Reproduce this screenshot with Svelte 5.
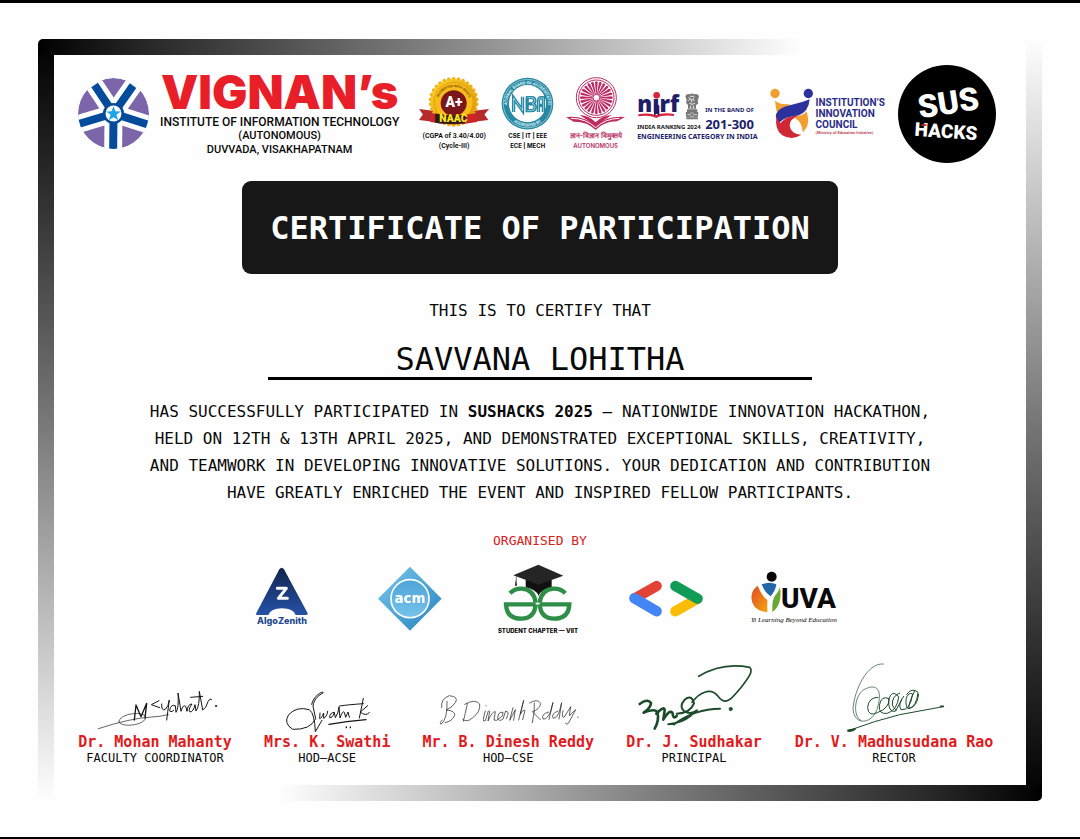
<script>
  const rays = Array.from({ length: 24 }, (_, i) => i * 15);
  const teeth = Array.from({ length: 30 }, (_, i) => i * 12);
  const spokes = [
    [284, 254],
    [400, 256],
    [238, 371],
    [444, 373],
    [340, 450]
  ];
</script>

<main class="sheet">
  <article class="frame">
    <div class="content">
      <header class="header">
        <div class="brand">
          <svg class="brand-mark" viewBox="234 233 214 214" aria-hidden="true">
            <defs>
              <clipPath id="wheel"><circle cx="341" cy="340" r="107" /></clipPath>
            </defs>
            <g clip-path="url(#wheel)">
              <circle cx="341" cy="340" r="107" fill="#7c65a9" />
              {#each spokes as [x, y]}
                <line x1="341" y1="340" x2={x} y2={y} stroke="#fff" stroke-width="54" stroke-linecap="square" />
              {/each}
              {#each spokes as [x, y]}
                <line x1="341" y1="340" x2={x} y2={y} stroke="#054b9b" stroke-width="24" />
              {/each}
            </g>
            <circle cx="341" cy="340" r="32" fill="#054b9b" />
            <circle cx="341" cy="340" r="24" fill="#fff" />
            <path d="M341 318l6 15 16 1-13 10 5 16-14-9-14 9 5-16-13-10 16-1z" fill="#20a5e8" />
          </svg>
          <div class="brand-text">
            <div class="brand-name">VIGNAN’s</div>
            <div class="brand-line">INSTITUTE OF INFORMATION TECHNOLOGY</div>
            <div class="brand-line small">(AUTONOMOUS)</div>
            <div class="brand-line small">DUVVADA, VISAKHAPATNAM</div>
          </div>
        </div>

        <div class="badges">
          <div class="badge naac">
            <svg viewBox="49 15 216 198" aria-hidden="true">
              <defs>
                <path id="naac-arc" d="M106 130a50 50 0 0 1 100 0" />
                <linearGradient id="gold" x1="0" y1="0" x2="1" y2="1">
                  <stop offset="0" stop-color="#fbd125" />
                  <stop offset="1" stop-color="#dc930b" />
                </linearGradient>
              </defs>
              <path d="M49 148l50 6v34l-50-6 12-17zM265 148l-52 6v34l50-6-12-17z" fill="#b52b2c" />
              {#each teeth as a}
                <circle cx="156" cy="55" r="6" fill="#efb01a" transform="rotate({a} 156 126)" />
              {/each}
              <circle cx="156" cy="126" r="71" fill="url(#gold)" />
              <circle cx="156" cy="126" r="60" fill="#f8bd1b" stroke="#d88d08" stroke-width="2" />
              <text font-size="10" font-weight="700" fill="#764308"><textPath href="#naac-arc" startOffset="50%" text-anchor="middle">ACCREDITED WITH GRADE</textPath></text>
              <circle cx="156" cy="130" r="40" fill="#7b171b" />
              <path d="M84 160q72 14 144 0v28q-72 14-144 0z" fill="#cc2529" />
              <path d="M99 162q57 10 96 3l-5 27q-46 5-91-2z" fill="#2c1c18" />
              <text class="naac-grade" x="157" y="143" text-anchor="middle">A+</text>
              <text class="naac-label" x="155" y="188" text-anchor="middle">NAAC</text>
            </svg>
            <span class="caption-cgpa">(CGPA of 3.40/4.00)</span>
            <span class="caption-cgpa">(Cycle-III)</span>
          </div>

          <div class="badge nba">
            <svg viewBox="303 15 160 198" aria-hidden="true">
              <defs>
                <path id="nba-top" d="M321 134a62 62 0 0 1 124 0" />
                <path id="nba-bottom" d="M316 133a67 67 0 0 0 134 0" />
              </defs>
              <circle cx="383" cy="131" r="78" fill="#2688a3" />
              <circle cx="383" cy="131" r="73" fill="none" stroke="#b6dce5" stroke-width="2" />
              <circle cx="383" cy="131" r="56" fill="#fff" />
              <text class="ring-text"><textPath href="#nba-top" startOffset="50%" text-anchor="middle">NATIONAL BOARD OF ACCREDITATION</textPath></text>
              <text class="ring-text"><textPath href="#nba-bottom" startOffset="50%" text-anchor="middle">ACCREDITED BY</textPath></text>
              <g fill="none" stroke="#2688a3" stroke-width="10">
                <path d="M341 156v-42l27 38v-42M378 113h18q9 0 9 9 0 7-8 9 9 2 9 10 0 11-11 11h-18M383 132h15M382 113v39M416 156v-32q0-11 10-11h5v43M416 136h15" />
              </g>
              <path d="M341 156v-42l27 38v-42M382 113h14q9 0 9 9 0 7-8 9 9 2 9 10 0 11-11 11h-13M416 156v-32q0-11 10-11h5v43" fill="none" stroke="#d3edf3" stroke-width="2" />
            </svg>
            <span class="caption-branch">CSE | IT | EEE</span>
            <span class="caption-branch">ECE | MECH</span>
          </div>

          <div class="badge ugc">
            <svg viewBox="490 15 177 198" aria-hidden="true">
              <circle cx="581" cy="113" r="60" fill="#fff" stroke="#be2b64" stroke-width="3" />
              <circle cx="581" cy="113" r="53" fill="#fff" stroke="#be2b64" stroke-width="3" />
              {#each rays as a}
                <path d="M580 102l-3-35q4-7 8 0l-3 35z" fill="#be2b64" transform="rotate({a} 581 113)" />
              {/each}
              <circle cx="581" cy="113" r="10" fill="#fff" stroke="#be2b64" stroke-width="3" />
              <path d="M490 171q53-5 89 25 36-29 88-25l-24 13q-39 0-64 26-25-26-66-25z" fill="#bd2b5f" />
              <path d="M505 175q45 0 74 28 28-27 71-28" fill="none" stroke="#fff" stroke-width="3" />
              <path d="M531 165q30 2 48 22 18-20 48-22l-48 32z" fill="#bd2b5f" />
            </svg>
            <span class="caption-hindi" lang="hi">ज्ञान-विज्ञान विमुक्तये</span>
            <span class="caption-auto">AUTONOMOUS</span>
          </div>

          <div class="nirf">
            <div class="nirf-left">
              <svg viewBox="33 15 195 171" aria-hidden="true">
                <text class="nirf-word" x="34" y="156">nırf</text>
                <circle cx="92" cy="106" r="10" fill="#d8253c" />
                <path d="M37 163q34-6 53 3 20-10 54-4v6q-34-4-53 6-20-10-54-5z" fill="#d8253c" />
                <path d="M84 167v-30q8-9 16 0v30l-8-6z" fill="#211d68" />
                <g fill="#777">
                  <path d="M178 109q4-9 14-6 6-5 12 0 10-4 15 5l-4 15 2 7-7 6v10h-24v-11l-6-7 2-7z" />
                  <path d="M183 148h31v7h-31zM179 157q18-7 38 0l-2 16h-34zM181 174h35v4h-35z" />
                </g>
                <path d="M187 113l7 4-7 5M205 113l-6 5 7 4M190 130q8 6 17 0M194 137v9M203 137v9M192 109h13M197 117v11" fill="none" stroke="#e9e9e9" stroke-width="3" />
                <circle cx="198" cy="164" r="6" fill="none" stroke="#ddd" stroke-width="2" />
                <path d="M184 164h7M206 164h7" stroke="#ddd" stroke-width="3" />
              </svg>
              <span class="nirf-rank">INDIA RANKING 2024</span>
            </div>
            <div class="nirf-right">
              <span class="nirf-band">IN THE BAND OF</span>
              <span class="nirf-range">201-300</span>
            </div>
            <span class="nirf-category">ENGINEERING CATEGORY IN INDIA</span>
          </div>

          <div class="iic">
            <svg viewBox="438 84 120 152" aria-hidden="true">
              <circle cx="453" cy="100" r="14" fill="#f0a032" />
              <circle cx="553" cy="100" r="14" fill="#2c319b" />
              <path d="M453 121q15 14 45 11l-38 31q-5-22-7-42z" fill="#f0a032" />
              <path d="M466 188q-20-18-2-38 16-12 42-17 30-7 51-16-3 37-34 49-40 2-57 22z" fill="#2c319b" />
              <path d="M458 166q-8 42 17 59 29 17 57-1-32-2-35-28 0-20 28-29-34-4-56 22-9-10-11-23z" fill="#d02635" />
              <path d="M523 167q17-3 24-14 15 41-11 63-2-31-23-42 4-5 10-7z" fill="#f0a032" />
            </svg>
            <div class="iic-text">
              <span>INSTITUTION’S</span>
              <span>INNOVATION</span>
              <span>COUNCIL</span>
              <small>(Ministry of Education Initiative)</small>
            </div>
          </div>
        </div>

        <svg class="hacks" viewBox="0 0 98 98" role="img" aria-label="SUS HACKS">
          <circle cx="49" cy="49" r="49" fill="#000" />
          <text class="hacks-top" x="51" y="49" text-anchor="middle" transform="rotate(-9 50 42)">SUS</text>
          <text class="hacks-bottom" x="48" y="73" text-anchor="middle" transform="rotate(4 49 67)">HACKS</text>
          <ellipse cx="26" cy="60" rx="3" ry="1" fill="#c3232c" />
        </svg>
      </header>

      <h1 class="title">CERTIFICATE OF PARTICIPATION</h1>
      <p class="lead">THIS IS TO CERTIFY THAT</p>
      <h2 class="recipient">SAVVANA LOHITHA</h2>
      <p class="statement">
        HAS SUCCESSFULLY PARTICIPATED IN <strong>SUSHACKS 2025</strong> — NATIONWIDE INNOVATION HACKATHON,<br />
        HELD ON 12TH &amp; 13TH APRIL 2025, AND DEMONSTRATED EXCEPTIONAL SKILLS, CREATIVITY,<br />
        AND TEAMWORK IN DEVELOPING INNOVATIVE SOLUTIONS. YOUR DEDICATION AND CONTRIBUTION<br />
        HAVE GREATLY ENRICHED THE EVENT AND INSPIRED FELLOW PARTICIPANTS.
      </p>

      <h3 class="organised">ORGANISED BY</h3>
      <section class="organisers">
        <div class="organiser">
          <svg width="54" height="53" viewBox="78 114 162 159" aria-hidden="true">
            <defs>
              <linearGradient id="algo" x1="0" y1="0" x2="0" y2="1">
                <stop offset="0" stop-color="#10254b" />
                <stop offset="1" stop-color="#2551a8" />
              </linearGradient>
            </defs>
            <path d="M151 133q7-9 14 0l71 132q2 5-4 5h-32q-7-20-41-20t-41 20H86q-7 0-4-6z" fill="url(#algo)" />
            <path d="M145 190h27l-24 30h27" fill="none" stroke="#fff" stroke-width="9" stroke-linejoin="round" stroke-linecap="round" />
          </svg>
          <span class="algo-name">AlgoZenith</span>
        </div>

        <div class="organiser">
          <svg width="66" height="72" viewBox="442 114 198 216" role="img" aria-label="acm">
            <defs>
              <linearGradient id="acm" x1="0" y1="0" x2="1" y2="1">
                <stop offset="0" stop-color="#7cc5ea" />
                <stop offset="0.5" stop-color="#4ea5d6" />
                <stop offset="1" stop-color="#2b83bd" />
              </linearGradient>
              <linearGradient id="acm-disc" x1="0" y1="0" x2="0" y2="1">
                <stop offset="0" stop-color="#4da4d6" />
                <stop offset="1" stop-color="#76c3ec" />
              </linearGradient>
            </defs>
            <path d="M541 125l95 96-95 96-96-96z" fill="url(#acm)" />
            <circle cx="541" cy="221" r="57" fill="url(#acm-disc)" stroke="#fff" stroke-width="5" />
            <text class="acm-word" x="541" y="234" text-anchor="middle">acm</text>
          </svg>
        </div>

        <div class="organiser">
          <svg width="70" height="62" viewBox="819 114 210 186" aria-hidden="true">
            <path d="M887 165h78v22q-30 5-39 25-10-20-39-25z" fill="#111" />
            <path d="M850 151l75-32 75 33-74 27z" fill="#252525" />
            <path d="M859 154v28" stroke="#333" stroke-width="2" />
            <path d="M857 165l-2 17h6z" fill="#222" />
            <g fill="none" stroke="#2e8d46" stroke-width="13">
              <path d="M840 205q14-15 36-14 36 3 41 42M917 238h-89q2 43 46 43 40-1 43-43" />
              <path d="M1006 205q-14-15-36-14-36 3-41 42M929 238h89q-2 43-46 43-40-1-43-43" />
            </g>
          </svg>
          <span class="chapter">STUDENT CHAPTER — VIIT</span>
        </div>

        <div class="organiser">
          <svg width="74" height="72" viewBox="114 114 222 216" aria-hidden="true">
            <g stroke-width="31" stroke-linecap="round">
              <path d="M197 183l-65 37" stroke="#e34334" />
              <path d="M130 220l67 39" stroke="#4385f4" />
              <path d="M253 259l65-37" stroke="#fbbc05" />
              <path d="M253 183l67 38" stroke="#109b57" />
            </g>
          </svg>
        </div>

        <div class="organiser">
          <svg width="86" height="52" viewBox="478 114 258 156" role="img" aria-label="YUVA">
            <defs>
              <linearGradient id="flame" x1="0" y1="0" x2="1" y2="1">
                <stop offset="0" stop-color="#df4926" />
                <stop offset="1" stop-color="#f5a40e" />
              </linearGradient>
            </defs>
            <circle cx="540" cy="155" r="15" fill="#080808" />
            <path d="M498 182q12 31 29 43v37q-45-4-48-44 1-24 19-36z" fill="url(#flame)" />
            <path d="M510 178q24-10 44 0-2 18-17 36-18-13-27-36z" fill="#2268a8" />
            <path d="M565 186q8 54-23 75-2-37 8-49 10-10 15-26z" fill="#6ba737" />
            <text class="yuva-word" x="568" y="248">UVA</text>
          </svg>
          <span class="yuva-tag">Yi Learning Beyond Education</span>
        </div>
      </section>

      <footer class="signers">
        <div class="signer">
          <svg width="154" height="72" viewBox="24 30 462 216" aria-hidden="true">
            <g class="ink">
              <path d="M85 233q94-31 160-35 25-1 50-7M147 213c-1-26 74-34 80-15 1 24-72 34-80 15" />
              <path d="M193 207l5-45 15 35 17-40-5 44" stroke-width="4" />
              <path d="M267 149l-23 12 25 9M275 159q-1 23 11 16 9-8 12-28l-8 60" stroke-width="3" />
              <path d="M311 178q-11 9-12-1 4-18 17-13l2 20q9-12 6-58l9 55q6-22 14-15l4 15q2-22 15-22-13 18-6 24 11-1 15-22l3 19q11-15 10-59l10 56q10-4 16-25 6-12 11-6M362 139l36-3" stroke-width="3" />
              <circle cx="438" cy="165" r="2" fill="currentColor" />
            </g>
          </svg>
          <strong>Dr. Mohan Mahanty</strong>
          <span>FACULTY COORDINATOR</span>
        </div>

        <div class="signer">
          <svg width="126" height="72" viewBox="589 30 378 216" aria-hidden="true">
            <g class="ink">
              <path d="M732 160c5-28 39-43 34-34-11 6-27 16-30 39l8 38q-16 34-69 32-29-18-12-44 24-26 62-15 16 11 18 66l20-34" stroke-width="3" />
              <path d="M757 186l-1 17q4 2 12-17v16q10-5 12-21M800 184q-15 1-14 16 8 2 14-15l3 15q9-12 11-33l3 34q8-24 13-17l4 15 7-16 4 16M816 165q26-4 71-7M887 142l-12 59M900 164l-22 19q15 14 27 2" stroke-width="3" />
              <path d="M784 220q52-9 111-14M836 228v2M848 228v2" stroke-width="4" />
            </g>
          </svg>
          <strong>Mrs. K. Swathi</strong>
          <span>HOD–ACSE</span>
        </div>

        <div class="signer">
          <svg width="170" height="72" viewBox="73 30 510 216" aria-hidden="true">
            <g class="ink">
              <path d="M145 151q2 54-18 69-6-4 3-13M129 170q-4-26 23-36 28 3 19 19-8 15-28 24 27 2 25 16-7 18-29 22" />
              <path d="M206 158q-7 34-12 53M192 205q12 11 29-4 25-18 22-42-13-17-45 1" />
              <path d="M260 180q-12 37 0 29l9-29M262 164v1M273 181l-5 29q12-29 22-28l-4 25q9 5 15-5 15-6 12-18-14-3-16 16 3 14 16 4l8-24q14 1 2 23M343 170l-10 38 17-32-5 32M360 207l15-59-10 42q10-16 14-12l-7 28" />
              <path d="M407 156q2 25-6 59M393 156q25-15 33 2-3 17-25 24l24 24M450 183q-23 6-17 21 10 3 22-20l8-30-12 51M478 180q-23 9-14 22 12-1 18-20l7-27-8 49M493 179q-6 24 4 19l19-31-4 27 19-18-22 41q-8 5-8-1M537 198l2 1" />
            </g>
          </svg>
          <strong>Mr. B. Dinesh Reddy</strong>
          <span>HOD–CSE</span>
        </div>

        <div class="signer">
          <svg width="136" height="72" viewBox="679 30 408 216" aria-hidden="true">
            <g class="ink green">
              <path d="M897 76q70-43 153-27c14 12-10 39-27 62-22 24-42 58-66 27-25-33-60-11-80 16" stroke-width="5" />
              <path d="M720 159q24-18 34-3-1 15-22 29 34-14 41-1 7 22-8 49M770 188q24-25 25-10l-4 28q20-34 28-19 0 19 12 8" stroke-width="8" />
              <path d="M831 188q41-2 52-31-7-28-28-11-18 21-2 34 20 13 39-2M806 220q40-3 69-27M823 220q63-47 138-47" stroke-width="6" />
              <circle cx="993" cy="174" r="5" fill="currentColor" />
            </g>
          </svg>
          <strong>Dr. J. Sudhakar</strong>
          <span>PRINCIPAL</span>
        </div>

        <div class="signer">
          <svg width="200" height="72" viewBox="102 30 600 216" aria-hidden="true">
            <g class="ink green">
              <path d="M370 39c-49-5-87 79-91 134 4 58 64 43 74-5 17-59-9-71-43-51-31 24-29 84-7 91" />
              <path d="M354 139q-29 0-31 31 2 28 29 15 37-14 35-42-23-11-29 20-3 28 24 24 31-11 34-50-21-24-30 10-2 37 20 34l19-34M419 126q-24 10-22 36 9 17 13 15M431 136q-19 24-8 40 27 4 35-47-14-7-20 16-1 30 9 28 23-7 27-49-18-16-34 6M464 119q-20 42-17 53 24-3 29-42" stroke-width="3" />
              <path d="M268 238q77-29 151-47l130-24" stroke-width="3" />
              <path d="M264 238l22-4q-9 8-22 6M542 166h8" stroke-width="5" />
            </g>
          </svg>
          <strong>Dr. V. Madhusudana Rao</strong>
          <span>RECTOR</span>
        </div>
      </footer>
    </div>
  </article>
</main>

<style>
  :global(body) {
    margin: 0;
    background: #fff;
  }

  .sheet {
    box-sizing: border-box;
    min-height: 100vh;
    padding: 36px 38px 34px;
    border-top: 3px solid #000;
    border-bottom: 2px solid #000;
    background: #fefefe;
    color: #090909;
    font-family: "DejaVu Sans Mono", "Liberation Mono", monospace;
  }

  .frame {
    padding: 16px;
    border-radius: 5px;
    background:
      linear-gradient(to right, #000, #222 12%, #777 48%, #fefefe) left top / 76% 16px no-repeat,
      linear-gradient(to left, #000, #222 12%, #777 48%, #fefefe) right bottom / 76% 16px no-repeat,
      linear-gradient(to bottom, #000, #222 15%, #777 50%, #fefefe) left top / 16px 100% no-repeat,
      linear-gradient(to top, #000, #222 15%, #777 50%, #fefefe) right top / 16px 100% no-repeat;
  }

  .content {
    display: flex;
    flex-direction: column;
    align-items: center;
    padding: 10px 24px 20px;
  }

  svg {
    display: block;
    flex: none;
    overflow: visible;
  }

  .header {
    display: flex;
    align-self: stretch;
    gap: 13px;
    padding-right: 6px;
  }

  .brand {
    display: flex;
    gap: 11px;
    padding-top: 4px;
  }

  .brand-mark {
    width: 71px;
    height: 71px;
    margin-top: 9px;
  }

  .brand-text {
    text-align: center;
    white-space: nowrap;
  }

  .brand-name {
    color: #e81f29;
    font: 900 47px/46px Inter, sans-serif;
  }

  .brand-line {
    font: 500 12px/14px Roboto, sans-serif;
  }

  .brand-line.small {
    font-size: 11px;
  }

  .badges {
    display: flex;
    gap: 12px;
    margin-left: auto;
    white-space: nowrap;
  }

  .badge {
    display: flex;
    flex-direction: column;
    align-items: center;
  }

  .badge svg {
    width: 100%;
    height: 66px;
  }

  .naac {
    width: 70px;
  }

  .nba {
    width: 53px;
  }

  .ugc {
    width: 59px;
  }

  .badge svg text {
    font-family: Roboto, sans-serif;
  }

  .badge svg .naac-grade {
    fill: #fff;
    font-size: 43px;
    font-weight: 900;
  }

  .badge svg .naac-label {
    fill: #ffe719;
    font-size: 32px;
    font-weight: 900;
  }

  .badge svg .ring-text {
    fill: #e3f5f8;
    font-size: 12px;
    font-weight: 700;
  }

  .caption-cgpa {
    font: 600 7px/10px Roboto, sans-serif;
  }

  .caption-branch {
    font: 700 6px/10px Inter, sans-serif;
  }

  .caption-hindi,
  .caption-auto {
    color: #b92e63;
    font: 600 7px/10px Inter, sans-serif;
  }

  .caption-auto {
    font-size: 6px;
  }

  .nirf {
    display: grid;
    grid-template-columns: 65px auto;
    align-content: start;
    column-gap: 3px;
    color: #211d68;
  }

  .nirf-left {
    display: flex;
    flex-direction: column;
  }

  .nirf-left svg {
    width: 65px;
    height: 57px;
  }

  .nirf-right {
    display: flex;
    flex-direction: column;
    justify-content: flex-end;
  }

  .nirf-word {
    fill: #211d68;
    font: 800 67px "Open Sans", sans-serif;
  }

  .nirf-rank {
    color: #161616;
    font: 700 6px/10px "Noto Sans", sans-serif;
  }

  .nirf-band {
    font: 700 6px/12px "Noto Sans", sans-serif;
  }

  .nirf-range {
    font: 700 13px/16px "Noto Sans", sans-serif;
  }

  .nirf-category {
    grid-column: 1 / -1;
    font: 700 7px/10px "Noto Sans", sans-serif;
  }

  .iic {
    display: flex;
    align-self: flex-start;
    gap: 6px;
    padding-top: 23px;
  }

  .iic svg {
    width: 40px;
    height: 51px;
  }

  .iic-text {
    display: flex;
    flex-direction: column;
    padding-top: 9px;
    color: #292c87;
    font: 700 10px/11px Roboto, sans-serif;
  }

  .iic-text small {
    color: #c34a56;
    font-size: 4px;
    line-height: 6px;
  }

  .hacks {
    width: 98px;
    height: 98px;
  }

  .hacks text {
    fill: #fff;
    font-family: Roboto, sans-serif;
    font-weight: 900;
  }

  .hacks .hacks-top {
    font-size: 32px;
  }

  .hacks .hacks-bottom {
    font-size: 19px;
  }

  h1,
  h2,
  h3,
  p {
    margin: 0;
    text-align: center;
  }

  .title {
    margin-top: 18px;
    padding: 27px 28px 26px;
    border-radius: 9px;
    background: #171717;
    color: #fff;
    font-size: 32px;
    font-weight: 700;
    line-height: 40px;
  }

  .lead {
    margin-top: 27px;
    font-size: 16px;
    line-height: 20px;
  }

  .recipient {
    min-width: 544px;
    margin-top: 20px;
    border-bottom: 3px solid #000;
    font-size: 32px;
    font-weight: 400;
    line-height: 36px;
  }

  .statement {
    margin-top: 18px;
    font-size: 16px;
    line-height: 27px;
  }

  .organised {
    margin-top: 25px;
    color: #d82020;
    font-size: 13px;
    font-weight: 400;
    line-height: 20px;
  }

  .organisers {
    display: grid;
    grid-template-columns: repeat(5, 128px);
    margin-top: 12px;
    padding-right: 4px;
  }

  .organiser {
    display: flex;
    flex-direction: column;
    align-items: center;
    white-space: nowrap;
  }

  .algo-name {
    color: #24498c;
    font: 800 9px/10px Inter, sans-serif;
  }

  .acm-word {
    fill: #fff;
    font: 700 40px "DejaVu Sans", sans-serif;
  }

  .yuva-word {
    fill: #0a0a0a;
    font: 800 84px Roboto, sans-serif;
  }

  .chapter {
    font: 800 6px/12px Inter, sans-serif;
  }

  .yuva-tag {
    font: italic 7px/10px "Liberation Serif", serif;
  }

  .signers {
    display: flex;
    justify-content: center;
    gap: 32px;
    margin-top: 24px;
    padding-right: 8px;
    white-space: nowrap;
  }

  .signer {
    display: flex;
    flex-direction: column;
    align-items: center;
    font-size: 12px;
    line-height: 14px;
  }

  .signer strong {
    color: #e11a1d;
    font-size: 15px;
    line-height: 18px;
  }

  .ink {
    color: #161616;
    fill: none;
    stroke: currentColor;
    stroke-width: 2;
    stroke-linecap: round;
    stroke-linejoin: round;
  }

  .green {
    color: #1c4b29;
  }
</style>
